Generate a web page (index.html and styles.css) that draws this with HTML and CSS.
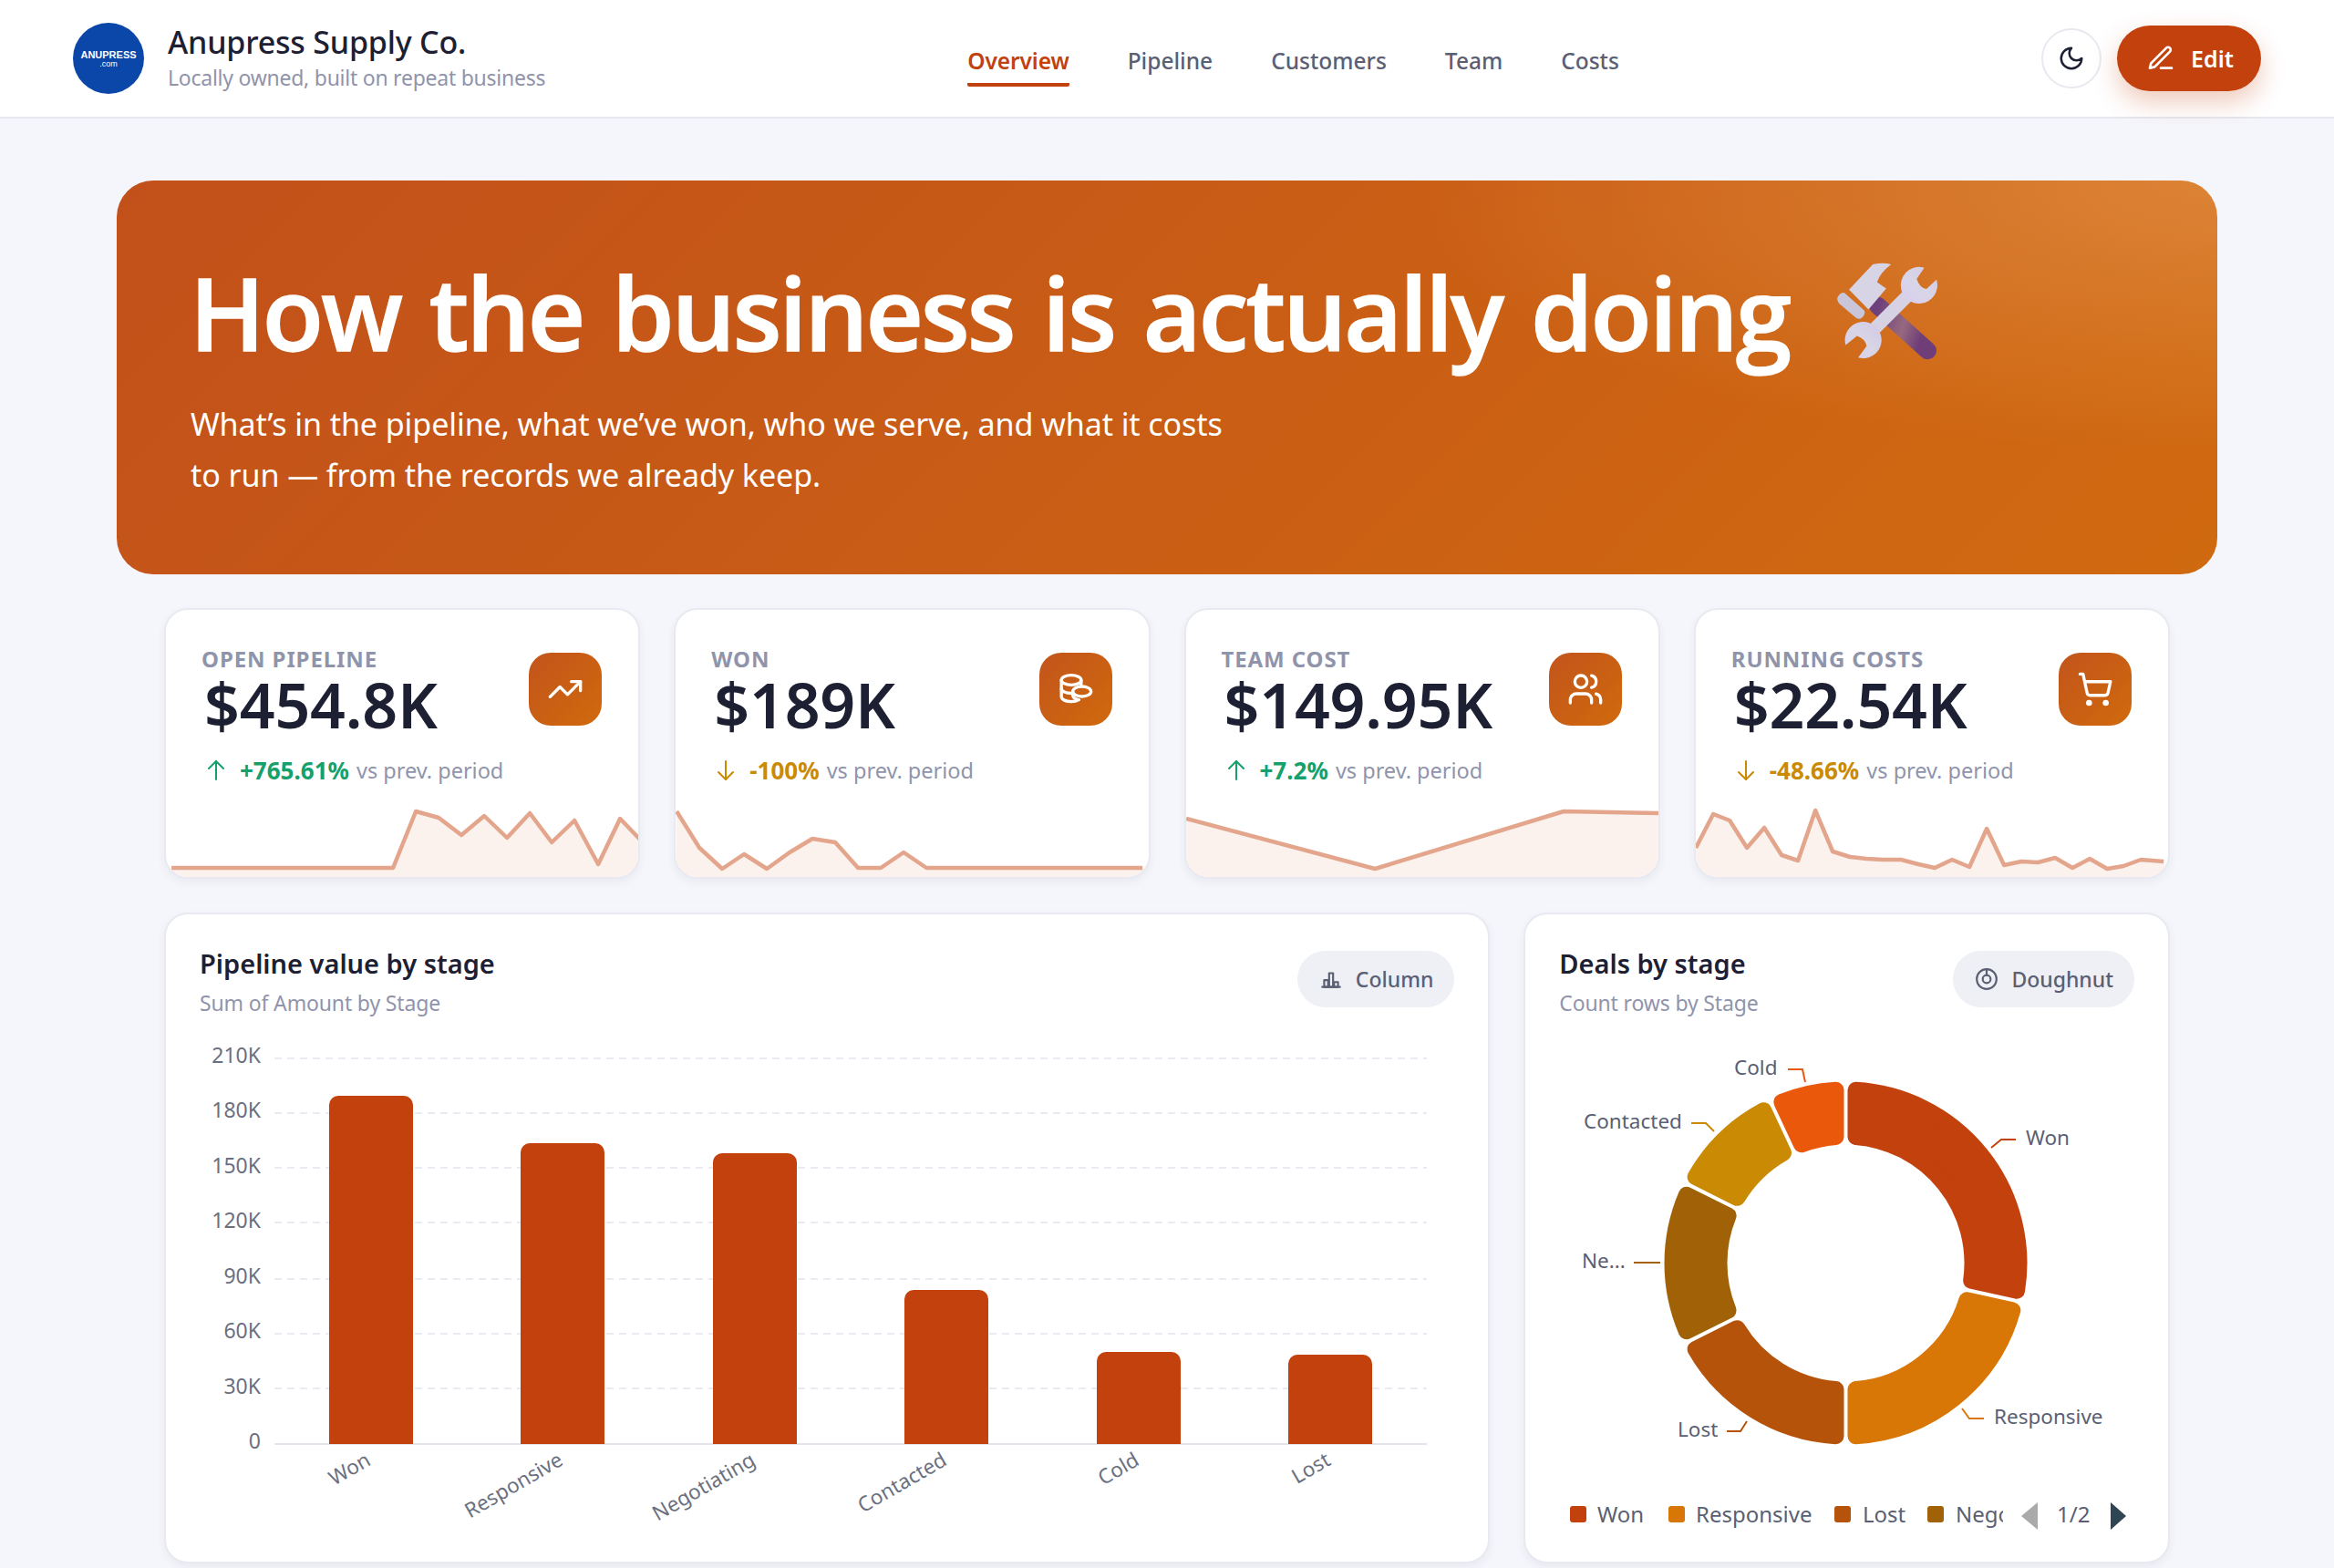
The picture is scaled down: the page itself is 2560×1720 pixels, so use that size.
FILE: index.html
```html
<!DOCTYPE html>
<html lang="en">
<head>
    <meta charset="UTF-8">
    <meta name="viewport" content="width=device-width, initial-scale=1.0">
    <title>Anupress Supply Co.</title>
    <link rel="stylesheet" href="styles.css">
</head>
<body>
    <header class="topbar">
        <div class="brand">
            <div class="logo"><span class="logo-name">ANUPRESS</span><span class="logo-com">.com</span></div>
            <div>
                <div class="brand-name">Anupress Supply Co.</div>
                <div class="brand-tag">Locally owned, built on repeat business</div>
            </div>
        </div>
        <nav class="nav">
            <a class="nav-link active">Overview</a>
            <a class="nav-link">Pipeline</a>
            <a class="nav-link">Customers</a>
            <a class="nav-link">Team</a>
            <a class="nav-link">Costs</a>
        </nav>
        <div class="actions">
            <button class="theme-btn">
                <svg class="icon" width="30" height="30" viewBox="0 0 24 24"><path d="M12 3a6 6 0 0 0 9 9 9 9 0 1 1-9-9Z"/></svg>
            </button>
            <button class="edit-btn">
                <svg class="icon" width="32" height="32" viewBox="0 0 24 24"><path d="M12 20h9"/><path d="M16.5 3.5a2.12 2.12 0 0 1 3 3L7 19l-4 1 1-4Z"/></svg>
                Edit
            </button>
        </div>
    </header>

    <main class="page">
        <section class="hero">
            <h1 class="hero-title">
                How the business is actually doing
                <svg class="hero-emoji" width="117" height="112" viewBox="330 145 350 335">
                    <defs>
                        <linearGradient id="handle" x1="0" y1="0" x2="1" y2="0.3">
                            <stop offset="0" stop-color="#6d3f7c"/>
                            <stop offset="0.6" stop-color="#96697f"/>
                            <stop offset="1" stop-color="#6f3d78"/>
                        </linearGradient>
                        <linearGradient id="steel" x1="0" y1="1" x2="1" y2="0">
                            <stop offset="0" stop-color="#d9cdf0"/>
                            <stop offset="0.5" stop-color="#d8d5e6"/>
                            <stop offset="1" stop-color="#d2c8e6"/>
                        </linearGradient>
                    </defs>
                    <path d="M472 292 L636 440" stroke="url(#handle)" stroke-width="58" stroke-linecap="round"/>
                    <path d="M378 240 L456 157 Q490 150 516 157 Q480 185 470 215 L500 236 L442 305 Z" fill="#d7d4e6"/>
                    <path d="M362 250 L428 308 Q434 318 420 333 Q408 340 396 328 L345 285 Q334 270 345 258 Q352 248 362 250 Z" fill="#c9c6da"/>
                    <path d="M445 385 L585 245" stroke="#d6d2e4" stroke-width="42"/>
                    <path d="M625 168 A60 60 0 1 0 665 207 L632 238 Q610 235 600 205 Z" fill="url(#steel)"/>
                    <path d="M367 422 A60 60 0 1 1 408 463 L436 425 Q430 400 404 392 Z" fill="url(#steel)"/>
                </svg>
            </h1>
            <p class="hero-text">What’s in the pipeline, what we’ve won, who we serve, and what it costs to run — from the records we already keep.</p>
        </section>

        <section class="kpis">
            <div class="kpi">
                <div class="kpi-top">
                    <div>
                        <div class="kpi-label">OPEN PIPELINE</div>
                        <div class="kpi-value">$454.8K</div>
                    </div>
                    <div class="kpi-icon">
                        <svg class="icon" width="40" height="40" viewBox="0 0 24 24"><polyline points="22 7 13.5 15.5 8.5 10.5 2 17"/><polyline points="16 7 22 7 22 13"/></svg>
                    </div>
                </div>
                <div class="kpi-delta">
                    <svg class="arrow up" width="24" height="26" viewBox="0 0 24 24"><path d="M12 22V2"/><path d="M4 10l8-8 8 8"/></svg>
                    <b class="up">+765.61%</b><span>vs prev. period</span>
                </div>
                <svg class="spark" width="518" height="79" viewBox="0 0 518 79">
                    <polygon class="spark-area" points="0,79 0,69 249,69 274,7 299,14 324,33 349,12 374,36 399,9 423,41 448,17 474,65 498,15 520,38 520,79"/>
                    <polyline class="spark-line" points="6,69 249,69 274,7 299,14 324,33 349,12 374,36 399,9 423,41 448,17 474,65 498,15 520,38"/>
                </svg>
            </div>
            <div class="kpi">
                <div class="kpi-top">
                    <div>
                        <div class="kpi-label">WON</div>
                        <div class="kpi-value">$189K</div>
                    </div>
                    <div class="kpi-icon">
                        <svg class="icon" width="40" height="40" viewBox="0 0 24 24"><ellipse cx="9" cy="6" rx="6.5" ry="3.2"/><path d="M2.5 6v11c0 1.8 3 3.2 6.500 3.200 2 0 3.800-.5 5-1.200"/><path d="M2.500 11.500c0 1.800 3 3.200 6.500 3.200"/><path d="M15.500 6v3"/><ellipse cx="16" cy="13.500" rx="6" ry="3.300"/><path d="M10 13.500v2.500c0 1 1 2 3 2.800"/></svg>
                    </div>
                </div>
                <div class="kpi-delta">
                    <svg class="arrow down" width="24" height="26" viewBox="0 0 24 24"><path d="M12 2v20"/><path d="M4 14l8 8 8-8"/></svg>
                    <b class="down">-100%</b><span>vs prev. period</span>
                </div>
                <svg class="spark" width="518" height="79" viewBox="0 0 518 79">
                    <polygon class="spark-area" points="0,79 1,7 26,47 51,70 75,54 100,70 125,52 150,37 175,41 200,69 225,69 250,52 275,69 512,69 518,79"/>
                    <polyline class="spark-line" points="1,7 26,47 51,70 75,54 100,70 125,52 150,37 175,41 200,69 225,69 250,52 275,69 512,69"/>
                </svg>
            </div>
            <div class="kpi">
                <div class="kpi-top">
                    <div>
                        <div class="kpi-label">TEAM COST</div>
                        <div class="kpi-value">$149.95K</div>
                    </div>
                    <div class="kpi-icon">
                        <svg class="icon" width="40" height="40" viewBox="0 0 24 24"><path d="M16 21v-2a4 4 0 0 0-4-4H6a4 4 0 0 0-4 4v2"/><circle cx="9" cy="7" r="4"/><path d="M22 21v-2a4 4 0 0 0-3-3.870"/><path d="M16 3.130a4 4 0 0 1 0 7.750"/></svg>
                    </div>
                </div>
                <div class="kpi-delta">
                    <svg class="arrow up" width="24" height="26" viewBox="0 0 24 24"><path d="M12 22V2"/><path d="M4 10l8-8 8 8"/></svg>
                    <b class="up">+7.2%</b><span>vs prev. period</span>
                </div>
                <svg class="spark" width="518" height="79" viewBox="0 0 518 79">
                    <polygon class="spark-area" points="0,79 0,15 207,70 414,7 518,9 518,79"/>
                    <polyline class="spark-line" points="0,15 207,70 414,7 518,9"/>
                </svg>
            </div>
            <div class="kpi">
                <div class="kpi-top">
                    <div>
                        <div class="kpi-label">RUNNING COSTS</div>
                        <div class="kpi-value">$22.54K</div>
                    </div>
                    <div class="kpi-icon">
                        <svg class="icon" width="40" height="40" viewBox="0 0 24 24"><circle cx="8" cy="21" r="1"/><circle cx="19" cy="21" r="1"/><path d="M2.050 2.050h2l2.660 12.420a2 2 0 0 0 2 1.580h9.780a2 2 0 0 0 1.950-1.570l1.650-7.430H5.120"/></svg>
                    </div>
                </div>
                <div class="kpi-delta">
                    <svg class="arrow down" width="24" height="26" viewBox="0 0 24 24"><path d="M12 2v20"/><path d="M4 14l8 8 8-8"/></svg>
                    <b class="down">-48.66%</b><span>vs prev. period</span>
                </div>
                <svg class="spark" width="518" height="79" viewBox="0 0 518 79">
                    <polygon class="spark-area" points="0,79 0,47 19,10 37,17 56,47 75,25 94,55 112,61 131,6 150,51 169,57 187,59 206,60 225,60 244,65 262,69 281,60 300,68 319,26 338,66 357,62 375,63 394,58 413,69 432,59 451,70 469,67 488,60 513,62 518,79"/>
                    <polyline class="spark-line" points="0,47 19,10 37,17 56,47 75,25 94,55 112,61 131,6 150,51 169,57 187,59 206,60 225,60 244,65 262,69 281,60 300,68 319,26 338,66 357,62 375,63 394,58 413,69 432,59 451,70 469,67 488,60 513,62"/>
                </svg>
            </div>
        </section>

        <section class="charts">
            <div class="chart-card">
                <div class="chart-head">
                    <div>
                        <h2 class="chart-title">Pipeline value by stage</h2>
                        <div class="chart-sub">Sum of Amount by Stage</div>
                    </div>
                    <button class="chart-type">
                        <svg class="icon" width="26" height="26" viewBox="0 0 24 24"><path d="M3 20h18"/><rect x="5" y="13" width="4" height="7"/><rect x="10" y="6" width="4" height="14"/><rect x="15" y="15" width="4" height="5"/></svg>
                        Column
                    </button>
                </div>
                <svg class="chart" width="1376" height="570" viewBox="219 1125 1376 570">
                    <g class="grid">
                        <line x1="301" x2="1565" y1="1161" y2="1161"/>
                        <line x1="301" x2="1565" y1="1221" y2="1221"/>
                        <line x1="301" x2="1565" y1="1281" y2="1281"/>
                        <line x1="301" x2="1565" y1="1341" y2="1341"/>
                        <line x1="301" x2="1565" y1="1403" y2="1403"/>
                        <line x1="301" x2="1565" y1="1463" y2="1463"/>
                        <line x1="301" x2="1565" y1="1523" y2="1523"/>
                    </g>
                    <line class="axis" x1="301" x2="1565" y1="1584" y2="1584"/>
                    <g class="y-labels">
                        <text x="286" y="1166">210K</text>
                        <text x="286" y="1226">180K</text>
                        <text x="286" y="1287">150K</text>
                        <text x="286" y="1347">120K</text>
                        <text x="286" y="1408">90K</text>
                        <text x="286" y="1468">60K</text>
                        <text x="286" y="1529">30K</text>
                        <text x="286" y="1589">0</text>
                    </g>
                    <g fill="#c2410c">
                        <path d="M361 1584V1212a10 10 0 0 1 10-10h72a10 10 0 0 1 10 10V1584Z"/>
                        <path d="M571 1584V1264a10 10 0 0 1 10-10h72a10 10 0 0 1 10 10V1584Z"/>
                        <path d="M782 1584V1275a10 10 0 0 1 10-10h72a10 10 0 0 1 10 10V1584Z"/>
                        <path d="M992 1584V1425a10 10 0 0 1 10-10h72a10 10 0 0 1 10 10V1584Z"/>
                        <path d="M1203 1584V1493a10 10 0 0 1 10-10h72a10 10 0 0 1 10 10V1584Z"/>
                        <path d="M1413 1584V1496a10 10 0 0 1 10-10h72a10 10 0 0 1 10 10V1584Z"/>
                    </g>
                    <g class="x-labels">
                        <text transform="translate(408 1606) rotate(-30)">Won</text>
                        <text transform="translate(619 1606) rotate(-30)">Responsive</text>
                        <text transform="translate(830 1606) rotate(-30)">Negotiating</text>
                        <text transform="translate(1040 1606) rotate(-30)">Contacted</text>
                        <text transform="translate(1251 1606) rotate(-30)">Cold</text>
                        <text transform="translate(1461 1606) rotate(-30)">Lost</text>
                    </g>
                </svg>
            </div>

            <div class="chart-card">
                <div class="chart-head">
                    <div>
                        <h2 class="chart-title">Deals by stage</h2>
                        <div class="chart-sub">Count rows by Stage</div>
                    </div>
                    <button class="chart-type">
                        <svg class="icon" width="26" height="26" viewBox="0 0 24 24"><circle cx="12" cy="12" r="10"/><circle cx="12" cy="12" r="4"/><path d="M12 2v6"/></svg>
                        Doughnut
                    </button>
                </div>
                <svg class="chart" width="630" height="570" viewBox="1710 1125 630 570">
                    <defs>
                        <clipPath id="legend-clip"><rect x="1710" y="1630" width="487" height="60"/></clipPath>
                    </defs>
                    <g id="donut"></g>
                    <g class="leaders">
                        <polyline stroke="#ea580c" points="1961,1173 1977,1173 1980,1187"/>
                        <polyline stroke="#ca8a04" points="1855,1232 1871,1232 1880,1241"/>
                        <polyline stroke="#c2410c" points="2211,1250 2195,1250 2184,1259"/>
                        <polyline stroke="#a16207" points="1792,1385 1821,1385"/>
                        <polyline stroke="#d97706" points="2176,1556 2160,1556 2152,1545"/>
                        <polyline stroke="#b45309" points="1894,1570 1909,1570 1916,1559"/>
                    </g>
                    <g class="donut-labels">
                        <text x="1902" y="1179">Cold</text>
                        <text x="1737" y="1238">Contacted</text>
                        <text x="2222" y="1256">Won</text>
                        <text x="1735" y="1391">Ne...</text>
                        <text x="2187" y="1562">Responsive</text>
                        <text x="1840" y="1576">Lost</text>
                    </g>
                    <g class="legend">
                        <rect x="1722" y="1652" width="18" height="18" rx="3" fill="#c2410c"/>
                        <text x="1752" y="1670">Won</text>
                        <rect x="1830" y="1652" width="18" height="18" rx="3" fill="#d97706"/>
                        <text x="1860" y="1670">Responsive</text>
                        <rect x="2012" y="1652" width="18" height="18" rx="3" fill="#b45309"/>
                        <text x="2043" y="1670">Lost</text>
                        <rect x="2114" y="1652" width="18" height="18" rx="3" fill="#a16207"/>
                        <text x="2145" y="1670" clip-path="url(#legend-clip)">Nego</text>
                    </g>
                    <polygon points="2235,1648 2235,1678 2217,1663" fill="#aaaaaa"/>
                    <text class="pager" x="2256" y="1670">1/2</text>
                    <polygon points="2315,1648 2315,1678 2332,1663" fill="#2f4554"/>
                </svg>
            </div>
        </section>
    </main>

    <script src="charts.js"></script>
</body>
</html>
```

FILE: styles.css
```css
* {
    box-sizing: border-box;
}
body {
    margin: 0;
    background: #f5f6fb;
    color: #1d2033;
    font-family: "Noto Sans", "Open Sans", sans-serif;
}
.icon {
    fill: none;
    stroke: currentColor;
    stroke-width: 2;
    stroke-linecap: round;
    stroke-linejoin: round;
}

/* top bar */
.topbar {
    display: flex;
    align-items: center;
    justify-content: space-between;
    height: 130px;
    padding: 0 80px;
    background: #fff;
    border-bottom: 2px solid #e6e7ef;
}
.brand {
    display: flex;
    align-items: center;
    gap: 26px;
}
.logo {
    display: flex;
    flex-direction: column;
    align-items: center;
    justify-content: center;
    width: 78px;
    height: 78px;
    border-radius: 50%;
    background: #0a47a9;
    color: #fff;
    font-family: "Liberation Sans", sans-serif;
}
.logo-name {
    font-size: 11px;
    font-weight: 700;
    line-height: 11px;
}
.logo-com {
    font-size: 9px;
    line-height: 8px;
}
.brand-name {
    margin-top: -2px;
    font-size: 34px;
    font-weight: 500;
    line-height: 44px;
    letter-spacing: -0.2px;
}
.brand-tag {
    color: #9094ab;
    font-size: 23px;
    line-height: 34px;
    letter-spacing: -0.25px;
}
.nav {
    display: flex;
    gap: 64px;
    margin-top: 6px;
}
.nav-link {
    padding: 11px 0 7px;
    border-bottom: 4px solid transparent;
    border-radius: 2px;
    color: #5a5f73;
    font-size: 24.5px;
    font-weight: 500;
    line-height: 34px;
}
.nav-link.active {
    border-bottom-color: #c2410c;
    color: #c2410c;
    font-weight: 600;
    letter-spacing: -0.1px;
}
.actions {
    display: flex;
    align-items: center;
    gap: 17px;
}
.theme-btn {
    display: flex;
    align-items: center;
    justify-content: center;
    width: 66px;
    height: 66px;
    padding: 0;
    background: #fff;
    border: 2px solid #e8e9f0;
    border-radius: 50%;
    color: #1d2033;
}
.edit-btn {
    display: flex;
    align-items: center;
    justify-content: center;
    gap: 17px;
    width: 158px;
    height: 72px;
    padding: 0 2px 0 4px;
    background: #c2410c;
    border: none;
    border-radius: 36px;
    box-shadow: 0 12px 28px rgba(194, 65, 12, 0.28);
    color: #fff;
    font-family: inherit;
    font-size: 25px;
    font-weight: 600;
}

/* page */
.page {
    padding: 68px 128px 5px;
}
.hero {
    height: 432px;
    padding: 71px 80px 0;
    border-radius: 40px;
    background:
        radial-gradient(ellipse 900px 300px at 100% 0, rgba(255, 200, 140, 0.3), rgba(255, 200, 140, 0)),
        linear-gradient(135deg, #c2501a, #d06a10);
    color: #fff;
}
.hero-title {
    display: flex;
    align-items: center;
    gap: 50px;
    margin: 0;
    font-family: "Open Sans", sans-serif;
    font-size: 110px;
    font-weight: 650;
    line-height: 146px;
    letter-spacing: -2.8px;
    word-spacing: 6px;
    -webkit-text-stroke: 1.5px #fff;
}
.hero-text {
    max-width: 1160px;
    margin: 22px 0 0 1px;
    font-size: 34.1px;
    line-height: 56px;
    letter-spacing: -0.1px;
}

/* kpi cards */
.kpis {
    display: grid;
    grid-template-columns: repeat(4, 1fr);
    gap: 37px;
    margin: 37px 52px 0;
}
.kpi {
    display: flex;
    flex-direction: column;
    height: 297px;
    overflow: hidden;
    background: #fff;
    border: 2px solid #e8e9f1;
    border-radius: 26px;
    box-shadow: 0 4px 10px rgba(40, 44, 80, 0.06);
}
.kpi-top {
    display: flex;
    justify-content: space-between;
    padding: 39px 40px 0 39px;
}
.kpi-label {
    color: #9094ab;
    font-size: 24px;
    font-weight: 700;
    line-height: 30px;
    letter-spacing: 0.9px;
}
.kpi-value {
    margin: -3px 0 0 3px;
    font-size: 68px;
    font-weight: 600;
    line-height: 76px;
    letter-spacing: -0.2px;
}
.kpi-icon {
    display: flex;
    align-items: center;
    justify-content: center;
    width: 80px;
    height: 80px;
    margin-top: 8px;
    border-radius: 24px;
    background: linear-gradient(135deg, #c2541c, #d06a0c);
    color: #fff;
}
.kpi-delta {
    display: flex;
    align-items: center;
    gap: 8px;
    height: 34px;
    margin: 17px 38px 0 43px;
    color: #9094ab;
    font-size: 23.5px;
}
.kpi-delta b {
    font-size: 26px;
    font-weight: 700;
}
.up {
    color: #16a06b;
}
.down {
    color: #ca8a04;
}
.arrow {
    margin-right: 6px;
    fill: none;
    stroke: currentColor;
    stroke-width: 2;
    stroke-linecap: round;
    stroke-linejoin: round;
}
.spark {
    display: block;
    margin-top: auto;
    width: 100%;
}
.spark-area {
    fill: #fbf2ee;
}
.spark-line {
    fill: none;
    stroke: #e3a68c;
    stroke-width: 4.5;
    stroke-linejoin: round;
}

/* chart cards */
.charts {
    display: grid;
    grid-template-columns: 1453fr 708fr;
    gap: 37px;
    margin: 37px 52px 0;
}
.chart-card {
    height: 714px;
    padding: 34px 37px 0;
    background: #fff;
    border: 2px solid #e8e9f1;
    border-radius: 26px;
    box-shadow: 0 4px 10px rgba(40, 44, 80, 0.06);
}
.chart-head {
    display: flex;
    align-items: flex-start;
    justify-content: space-between;
}
.chart-title {
    margin: 0;
    font-size: 29px;
    font-weight: 600;
    line-height: 40px;
}
.chart-sub {
    margin-top: 7px;
    color: #9094ab;
    font-size: 23px;
    line-height: 32px;
    letter-spacing: -0.15px;
}
.chart-type {
    display: flex;
    align-items: center;
    gap: 14px;
    height: 62px;
    margin-top: 6px;
    padding: 0 23px 0 24px;
    background: #eff0f6;
    border: none;
    border-radius: 31px;
    color: #5a5f73;
    font-family: inherit;
    font-size: 23px;
    font-weight: 500;
}
.chart {
    display: block;
    margin-top: 9px;
}
.grid line {
    stroke: #eaebf2;
    stroke-width: 2;
    stroke-dasharray: 8 6;
}
.axis {
    stroke: #e4e5ec;
    stroke-width: 2;
}
.y-labels text {
    fill: #6b7080;
    font-size: 23px;
    text-anchor: end;
}
.x-labels text {
    fill: #6b7080;
    font-size: 22.5px;
    text-anchor: end;
}
.leaders polyline {
    fill: none;
    stroke-width: 2;
}
.donut-labels text {
    fill: #5a5f73;
    font-size: 22.5px;
}
.legend text,
.pager {
    fill: #5a5f73;
    font-size: 24px;
}
```

FILE: charts.js
```js
// doughnut segments, angles in degrees clockwise from 12 o'clock
const segments = [
    { color: '#c2410c', from: 0, to: 102.5 },
    { color: '#d97706', from: 102.5, to: 180 },
    { color: '#b45309', from: 180, to: 243.5 },
    { color: '#a16207', from: 243.5, to: 296.5 },
    { color: '#ca8a04', from: 296.5, to: 335 },
    { color: '#ea580c', from: 335, to: 360 }
];
const cx = 2024.5, cy = 1385.5, outer = 199, inner = 130;
const corner = 9, gap = 2;

function point(r, deg) {
    const a = deg * Math.PI / 180;
    return (cx + r * Math.sin(a)).toFixed(2) + ' ' + (cy - r * Math.cos(a)).toFixed(2);
}

// inset shape with a thick round-joined stroke gives the rounded corners
function segmentPath(s) {
    const ro = outer - corner, ri = inner + corner;
    const dO = (corner + gap) / ro * 180 / Math.PI;
    const dI = (corner + gap) / ri * 180 / Math.PI;
    const large = s.to - s.from - 2 * dO > 180 ? 1 : 0;
    return 'M' + point(ro, s.from + dO) +
        'A' + ro + ' ' + ro + ' 0 ' + large + ' 1 ' + point(ro, s.to - dO) +
        'L' + point(ri, s.to - dI) +
        'A' + ri + ' ' + ri + ' 0 ' + large + ' 0 ' + point(ri, s.from + dI) + 'Z';
}

document.getElementById('donut').innerHTML = segments.map(s =>
    '<path d="' + segmentPath(s) + '" fill="' + s.color + '" stroke="' + s.color +
    '" stroke-width="' + corner * 2 + '" stroke-linejoin="round"/>'
).join('');
```
